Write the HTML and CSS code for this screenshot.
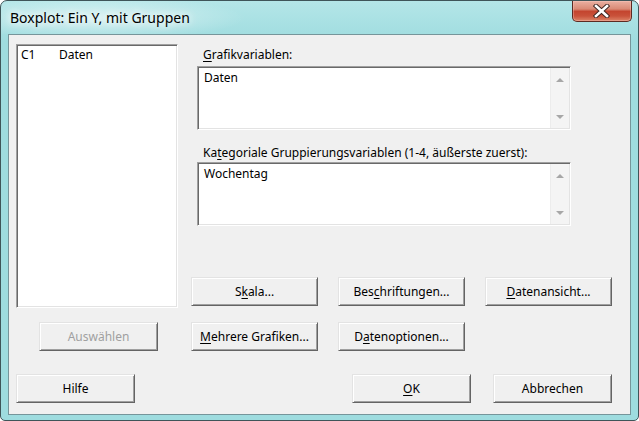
FILE: index.html
```html
<!DOCTYPE html>
<html lang="de">
<head>
<meta charset="utf-8">
<title>Boxplot: Ein Y, mit Gruppen</title>
<link rel="stylesheet" href="styles.css">
</head>
<body>
<div class="window">
  <div class="titlebar">
    <span class="title">Boxplot: Ein Y, mit Gruppen</span>
    <div class="close">
      <svg width="17" height="14" viewBox="0 0 17 14">
        <path d="M3 2 L14 12 M14 2 L3 12" stroke="#3b2420" stroke-width="4.4" stroke-linecap="square" fill="none"/>
        <path d="M3 2 L14 12 M14 2 L3 12" stroke="#ffffff" stroke-width="2.6" stroke-linecap="square" fill="none"/>
      </svg>
    </div>
  </div>
  <div class="client">
    <div class="main">
      <div class="left">
        <div class="listbox">
          <div class="list-row"><span class="list-col">C1</span><span>Daten</span></div>
        </div>
        <button class="btn btn-narrow btn-select" disabled>Auswählen</button>
      </div>
      <div class="right">
        <div class="field">
          <div class="label"><u>G</u>rafikvariablen:</div>
          <div class="textbox">
            <div class="tb-text">Daten</div>
            <div class="scroll"><span class="arrow up"></span><span class="arrow down"></span></div>
          </div>
        </div>
        <div class="field field-second">
          <div class="label label-second">Ka<u>t</u>egoriale Gruppierungsvariablen (1-4, äußerste zuerst):</div>
          <div class="textbox">
            <div class="tb-text">Wochentag</div>
            <div class="scroll"><span class="arrow up"></span><span class="arrow down"></span></div>
          </div>
        </div>
        <div class="btn-grid">
          <button class="btn">S<u>k</u>ala...</button>
          <button class="btn">Bes<u>c</u>hriftungen...</button>
          <button class="btn"><u>D</u>atenansicht...</button>
          <button class="btn"><u>M</u>ehrere Grafiken...</button>
          <button class="btn">D<u>a</u>tenoptionen...</button>
        </div>
      </div>
    </div>
    <div class="footer">
      <button class="btn btn-narrow">Hilfe</button>
      <button class="btn btn-narrow btn-ok"><u>O</u>K</button>
      <button class="btn btn-narrow btn-cancel">Abbrechen</button>
    </div>
  </div>
</div>
</body>
</html>
```
FILE: styles.css
```css
* { box-sizing: border-box; }
html, body { margin: 0; padding: 0; }
body {
  width: 639px;
  height: 421px;
  overflow: hidden;
  font-family: "Noto Sans", "Open Sans", sans-serif;
  font-size: 12px;
  color: #000;
  background: #fff;
}
.window {
  width: 639px;
  height: 421px;
  border: 1px solid #3f5559;
  border-radius: 7px 7px 5px 5px;
  background: linear-gradient(to bottom, #b4e6e8 0px, #9fdcdf 40px, #9edcdf 100%);
  display: flex;
  flex-direction: column;
  overflow: hidden;
}
.titlebar {
  height: 33px;
  display: flex;
  justify-content: space-between;
  align-items: flex-start;
  padding-left: 9px;
  padding-right: 6px;
  background: radial-gradient(ellipse 150px 22px at 95px 17px, rgba(255,255,255,0.55), rgba(255,255,255,0) 100%);
}
.title {
  margin-top: 7px;
  font-size: 14px;
  line-height: 20px;
  color: #000;
  text-shadow: 0 0 8px #fff, 0 0 10px rgba(255,255,255,0.9);
}
.close {
  width: 60px;
  height: 21px;
  border: 1px solid #5d2a22;
  border-top: none;
  border-radius: 0 0 5px 5px;
  background: linear-gradient(to bottom, #eab0a2 0%, #d98a76 40%, #c4452f 52%, #c9523a 75%, #dc8468 100%);
  box-shadow: inset 0 0 0 1px rgba(255,210,200,0.35);
  display: flex;
  align-items: center;
  justify-content: center;
}
.close svg { display: block; margin-left: -2px; }
.client {
  height: 381px;
  margin: 0 7px;
  border: 1px solid #76959a;
  background: #f0f0f0;
  display: flex;
  flex-direction: column;
}
.main {
  display: flex;
  padding-left: 7px;
}
.left {
  width: 162px;
  padding-top: 9px;
  display: flex;
  flex-direction: column;
}
.listbox {
  width: 162px;
  height: 264px;
  background: #fff;
  border: 1px solid;
  border-color: #a0a0a0 #ffffff #ffffff #a0a0a0;
  box-shadow: inset 1px 1px 0 #696969, inset -1px -1px 0 #e3e3e3;
  padding: 2px 4px;
}
.list-row { display: flex; line-height: 16px; }
.list-col { width: 38px; }
.right {
  margin-left: 13px;
  padding-top: 12px;
  display: flex;
  flex-direction: column;
}
.field { margin-left: 6px; width: 374px; }
.field-second { margin-top: 15px; }
.label {
  line-height: 16px;
  padding-left: 6px;
  height: 16px;
  white-space: nowrap;
}
.label + .textbox { margin-top: 3px; }
.label-second + .textbox { margin-top: 1px; }
.textbox {
  height: 64px;
  background: #fff;
  border: 1px solid;
  border-color: #a0a0a0 #ffffff #ffffff #a0a0a0;
  box-shadow: inset 1px 1px 0 #696969, inset -1px -1px 0 #e3e3e3;
  padding: 1px;
  display: flex;
}
.tb-text {
  flex: 1;
  padding: 2px 5px;
  line-height: 16px;
}
.scroll {
  width: 19px;
  background: #f4f4f4;
  border-left: 1px solid #ececec;
  display: flex;
  flex-direction: column;
  justify-content: space-between;
  align-items: center;
  padding: 10px 0 9px 0;
}
.arrow {
  width: 0;
  height: 0;
  border-left: 4px solid transparent;
  border-right: 4px solid transparent;
  margin-left: -1px;
}
.arrow.up { border-bottom: 4px solid #a7a7a7; }
.arrow.down { border-top: 4px solid #a7a7a7; }
.btn-grid {
  margin-top: 51px;
  display: grid;
  grid-template-columns: 127px 127px 127px;
  grid-auto-rows: 29px;
  column-gap: 20px;
  row-gap: 16px;
}
.btn {
  height: 29px;
  font-family: inherit;
  font-size: 12px;
  color: #000;
  background: #f0f0f0;
  border: 1px solid;
  border-color: #e3e3e3 #646464 #646464 #e3e3e3;
  box-shadow: inset 1px 1px 0 #ffffff, inset -1px -1px 0 #a0a0a0;
  padding: 0;
  margin: 0;
  line-height: 16px;
  white-space: nowrap;
}
.btn u { text-decoration: underline; text-underline-offset: 2px; }
.btn-narrow { width: 119px; }
.btn-select {
  margin-top: 14px;
  margin-left: 23px;
  color: #a0a0a0;
}
.footer {
  display: flex;
  margin-top: 23px;
  padding-left: 7px;
}
.btn-ok { margin-left: 217px; }
.btn-cancel { margin-left: 22px; }
u { text-underline-offset: 2px; }
```
